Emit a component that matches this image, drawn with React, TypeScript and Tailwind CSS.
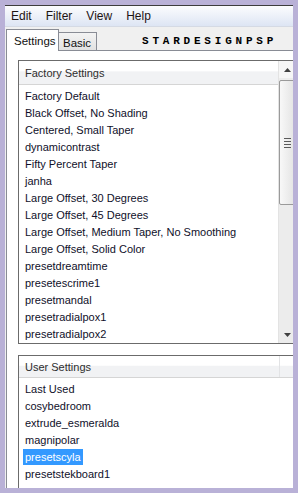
import React from "react";

const factory = [
  "Factory Default",
  "Black Offset, No Shading",
  "Centered, Small Taper",
  "dynamicontrast",
  "Fifty Percent Taper",
  "janha",
  "Large Offset, 30 Degrees",
  "Large Offset, 45 Degrees",
  "Large Offset, Medium Taper, No Smoothing",
  "Large Offset, Solid Color",
  "presetdreamtime",
  "presetescrime1",
  "presetmandal",
  "presetradialpox1",
  "presetradialpox2",
];

const user = [
  "Last Used",
  "cosybedroom",
  "extrude_esmeralda",
  "magnipolar",
  "presetscyla",
  "presetstekboard1",
];

const font = { fontFamily: '"Liberation Sans", Arial, sans-serif' };

function Row({ text, selected }: { text: string; selected?: boolean }) {
  return (
    <div className="h-[17px] flex items-center pl-[4px] whitespace-nowrap">
      <span
        className={
          "h-[16px] leading-[16px] px-[2px] " +
          (selected ? "bg-[#3399ff] text-white" : "text-[#10102a]")
        }
      >
        {text}
      </span>
    </div>
  );
}

function Header({ text }: { text: string }) {
  return (
    <div className="pl-[6px] pt-[1px] flex items-center h-full text-[#2e2e2e] whitespace-nowrap">
      {text}
    </div>
  );
}

function Scrollbar() {
  return (
    <div className="w-[17px] shrink-0 flex flex-col bg-[#ececec] border-l border-[#e3e3e3]">
      <div className="h-[17px] shrink-0 flex items-center justify-center bg-[#f6f6f6]">
        <svg width="7" height="4" viewBox="0 0 7 4">
          <polygon points="3.5,0 7,4 0,4" fill="#404040" />
        </svg>
      </div>
      <div className="flex-1 flex flex-col pt-[2px]">
        <div className="h-[125px] border border-[#9a9a9a] rounded-[2px] bg-[linear-gradient(to_right,#f8f8f8,#e4e4e4)] flex flex-col items-center justify-center gap-[2px]">
          <div className="w-[7px] h-[1px] bg-[#5a5a5a]" />
          <div className="w-[7px] h-[1px] bg-[#5a5a5a]" />
          <div className="w-[7px] h-[1px] bg-[#5a5a5a]" />
          <div className="w-[7px] h-[1px] bg-[#5a5a5a]" />
        </div>
      </div>
      <div className="h-[17px] shrink-0 flex items-center justify-center bg-[#ececec]">
        <svg width="7" height="4" viewBox="0 0 7 4">
          <polygon points="0,0 7,0 3.5,4" fill="#404040" />
        </svg>
      </div>
    </div>
  );
}

const brand = "STARDESIGNPSP".split("");

export default function App() {
  return (
    <div
      className="w-[298px] h-[493px] bg-[#b9b1d7] pt-[5px] pl-[5px] pr-[5px] pb-[5px] text-[11px]"
      style={font}
    >
      <div className="w-[288px] h-[483px] overflow-hidden flex flex-col bg-[#f0f0f0]">
        <div className="h-[1px] shrink-0 bg-[#3c3c3c]" />
        <div className="h-[20px] shrink-0 flex items-center pl-[6px] gap-[14px] text-[12px] text-[#1e1414] bg-[linear-gradient(to_bottom,#fbfcfe,#dde5f4)]">
          <span>Edit</span>
          <span>Filter</span>
          <span>View</span>
          <span>Help</span>
        </div>
        <div className="h-[1px] shrink-0 bg-[#d5dae4]" />
        <div className="h-[23px] shrink-0 flex items-end pl-[1px]">
          <div className="relative z-10 h-[22px] w-[53px] -mb-px border-t border-l border-r border-[#898c95] bg-white pl-[7px] pt-[3px] text-[11.5px] text-[#111]">
            Settings
          </div>
          <div className="h-[18px] w-[38px] border-t border-r border-[#898c95] bg-[linear-gradient(to_bottom,#f3f3f3,#e2e2e2)] pl-[4px] pt-[2px] text-[11.5px] text-[#111]">
            Basic
          </div>
          <div
            className="ml-[45px] mb-[4px] flex text-[11px] font-bold leading-[9px] text-black"
            style={{ fontFamily: '"Liberation Mono", monospace' }}
          >
            {brand.map((c, i) => (
              <span key={i} className="w-[10.4px] inline-block">
                {c}
              </span>
            ))}
          </div>
        </div>
        <div className="flex-1 ml-[1px] border-t border-l border-[#898c95] bg-white pt-[9px] pl-[11px] overflow-hidden">
          <div className="w-[278px] h-[284px] border border-[#6b6b6b] flex">
            <div className="flex-1 flex flex-col min-w-0">
              <div className="h-[24px] shrink-0 border-b border-[#d5d5d5] bg-[linear-gradient(to_bottom,#ffffff_45%,#f1f2f4_46%)]">
                <Header text="Factory Settings" />
              </div>
              <div className="flex-1 pt-[2px] overflow-hidden">
                {factory.map((t) => (
                  <Row key={t} text={t} />
                ))}
              </div>
            </div>
            <Scrollbar />
          </div>
          <div className="mt-[11px] w-[278px] h-[200px] border-t border-l border-r border-[#6b6b6b] flex flex-col">
            <div className="h-[22px] shrink-0 flex border-b border-[#d5d5d5] bg-[linear-gradient(to_bottom,#ffffff_45%,#f1f2f4_46%)]">
              <div className="w-[261px] border-r border-[#e2e3e5]">
                <Header text="User Settings" />
              </div>
            </div>
            <div className="pt-[2px]">
              {user.map((t) => (
                <Row key={t} text={t} selected={t === "presetscyla"} />
              ))}
            </div>
          </div>
        </div>
      </div>
    </div>
  );
}
